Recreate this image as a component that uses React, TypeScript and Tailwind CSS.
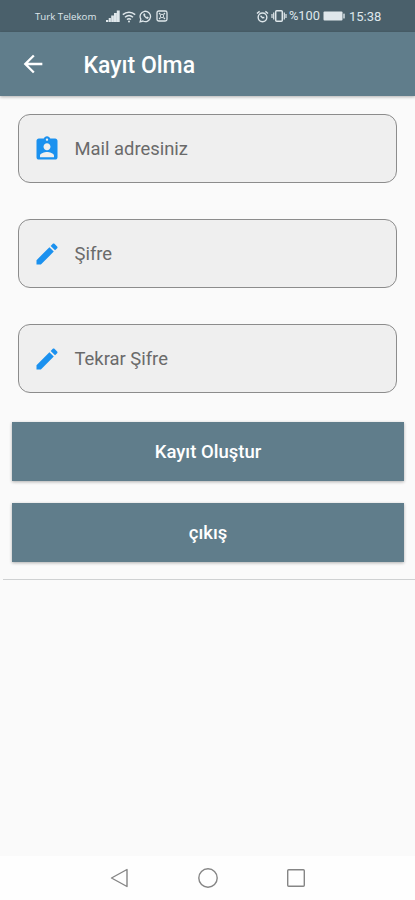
import React from "react";

function MaterialIcon({ d, className }: { d: string; className: string }) {
  return (
    <svg viewBox="0 0 24 24" fill="currentColor" className={className}>
      <path d={d} />
    </svg>
  );
}

const BACK = "M20 11H7.83l5.59-5.59L12 4l-8 8 8 8 1.41-1.41L7.83 13H20v-2z";
const PERSON_CARD =
  "M19 3h-4.18C14.4 1.84 13.3 1 12 1c-1.3 0-2.4.84-2.82 2H5c-1.1 0-2 .9-2 2v14c0 1.1.9 2 2 2h14c1.1 0 2-.9 2-2V5c0-1.1-.9-2-2-2zm-7 0c.55 0 1 .45 1 1s-.45 1-1 1-1-.45-1-1 .45-1 1-1zm0 4c1.66 0 3 1.34 3 3s-1.34 3-3 3-3-1.34-3-3 1.34-3 3-3zm6 12H6v-1.4c0-2 4-3.1 6-3.1s6 1.1 6 3.1V19z";
const PENCIL =
  "M3 17.25V21h3.75L17.81 9.94l-3.75-3.75L3 17.25zM20.71 7.04c.39-.39.39-1.02 0-1.41l-2.34-2.34c-.39-.39-1.02-.39-1.41 0l-1.83 1.83 3.75 3.75 1.83-1.83z";

function StatusBar() {
  return (
    <div className="flex h-8 shrink-0 items-center justify-between bg-[#4a606b] pl-[35px] pr-[33px] text-[#dfe7eb]">
      <div className="flex items-center">
        <span className="w-[71px] whitespace-nowrap pt-px font-['Open_Sans',sans-serif] text-[9.7px] font-medium leading-none">
          Turk Telekom
        </span>
        <svg viewBox="0 0 14 12" className="h-3 w-3.5" fill="currentColor">
          <path d="M0 12V10h2.2V12zM2.7 12V8h2.2V12zM5.200 12V5.500h2.700V12zM8 12V3h2.700V12zM10.800 12V.5h2.900V12z" />
        </svg>
        <svg viewBox="0 0 16 13" className="ml-[1px] h-[13px] w-4" fill="none" stroke="currentColor" strokeWidth="1.5">
          <path d="M1.8 4.6C5.5 1.3 10.5 1.3 14.2 4.6M4 7.2c2.4-2.1 5.6-2.1 8 0M6 9.5c1.2-1 2.8-1 4 0" />
          <circle cx="8" cy="11.4" r="1" fill="currentColor" stroke="none" />
        </svg>
        <svg viewBox="0 0 14 14" className="ml-[2px] h-[13px] w-[13px]" fill="none" stroke="currentColor" strokeWidth="1.4">
          <path d="M1.2 12.8l.8-3a5.6 5.6 0 1 1 2.2 2.1z" />
          <path d="M5 4.2c-.7 2 2.4 5.3 4.6 5.1l.6-1.3-1.5-.8-.8.6L6.3 6.2l.4-.8-.7-1.5z" fill="currentColor" strokeWidth=".5" />
        </svg>
        <svg viewBox="0 0 12 12" className="ml-[4px] h-3 w-3" fill="none" stroke="currentColor" strokeWidth="1.3">
          <rect x="1" y="1" width="10" height="10" rx="1.8" />
          <path d="M3 3l1.5 1.5M9 3L7.5 4.5M3 9l1.5-1.5M9 9L7.5 7.5" strokeWidth="1.1" />
          <circle cx="6" cy="6" r="1.7" strokeWidth=".9" />
        </svg>
      </div>
      <div className="flex items-center">
        <svg viewBox="0 0 14 14" className="h-[13px] w-[13px]" fill="none" stroke="currentColor" strokeWidth="1.5">
          <circle cx="7" cy="7.9" r="4.7" />
          <path d="M1 3.8L3.9 1.5M13 3.8L10.1 1.5M4.9 6.3l2.1 2 2-.2" />
        </svg>
        <svg viewBox="0 0 16 14" className="ml-[2px] h-3.5 w-4" fill="none" stroke="currentColor" strokeWidth="1.5">
          <rect x="4.7" y="1.7" width="6.6" height="10.6" rx="1" />
          <path d="M2.7 3.5v7M13.3 3.5v7M1 5v4M15 5v4" strokeWidth="1.2" />
        </svg>
        <span className="ml-[2px] w-[34px] whitespace-nowrap text-[12.8px] leading-none">%100</span>
        <svg viewBox="0 0 22 10" className="h-2.5 w-[22px]" fill="currentColor">
          <rect x=".5" y=".5" width="19" height="9" rx="1" />
          <rect x="20.3" y="2.5" width="1.4" height="5" rx=".5" />
        </svg>
        <span className="ml-[4px] w-[33px] whitespace-nowrap text-[13px] leading-none">15:38</span>
      </div>
    </div>
  );
}

function Field({ icon, label }: { icon: string; label: string }) {
  return (
    <div className="flex h-[69px] items-center rounded-[12px] border border-[#8c8c8c] bg-[#efefef] pl-[13.5px]">
      <MaterialIcon d={icon} className="h-7 w-7 text-[#1b91ef]" />
      <span className="ml-[14px] pt-[2px] text-[18.4px] leading-none text-[#6a6a6a]">{label}</span>
    </div>
  );
}

function ActionButton({ label }: { label: string }) {
  return (
    <button className="flex h-[59px] w-full items-center justify-center bg-[#607d8b] pt-[2px] text-[18.5px] font-medium leading-none text-white shadow-[0_1px_3px_rgba(0,0,0,0.3)]">
      {label}
    </button>
  );
}

export default function App() {
  return (
    <div className="flex h-[900px] w-full flex-col overflow-hidden bg-[#fafafa] font-['Roboto',sans-serif]">
      <StatusBar />
      <header className="flex h-16 shrink-0 items-center bg-[#607d8b] pl-[19px] text-white shadow-[0_1px_3px_rgba(0,0,0,0.3)]">
        <MaterialIcon d={BACK} className="h-7 w-7" />
        <h1 className="ml-[36.5px] pt-[3px] text-[23px] font-medium leading-none">Kayıt Olma</h1>
      </header>
      <main className="flex flex-1 flex-col">
        <div className="flex flex-col gap-9 px-[18px] pt-[18px]">
          <Field icon={PERSON_CARD} label="Mail adresiniz" />
          <Field icon={PENCIL} label="Şifre" />
          <Field icon={PENCIL} label="Tekrar Şifre" />
        </div>
        <div className="mt-[29px] flex flex-col gap-[22px] pl-[12px] pr-[11px]">
          <ActionButton label="Kayıt Oluştur" />
          <ActionButton label="çıkış" />
        </div>
        <div className="ml-[3px] mt-[17px] h-px bg-[#cfd1d2]" />
      </main>
      <nav className="flex h-11 shrink-0 items-center justify-center gap-[64px] bg-[#fefefe] text-[#858585]">
        <svg viewBox="0 0 24 24" className="h-6 w-6" fill="none" stroke="currentColor" strokeWidth="1.4" strokeLinejoin="round">
          <path d="M19 3.5v17L3.5 12z" />
        </svg>
        <svg viewBox="0 0 24 24" className="h-6 w-6" fill="none" stroke="currentColor" strokeWidth="1.4">
          <circle cx="12" cy="12" r="9.2" />
        </svg>
        <svg viewBox="0 0 24 24" className="h-6 w-6" fill="none" stroke="currentColor" strokeWidth="1.4">
          <rect x="3.7" y="3.7" width="16.6" height="16.6" rx="1" />
        </svg>
      </nav>
    </div>
  );
}
